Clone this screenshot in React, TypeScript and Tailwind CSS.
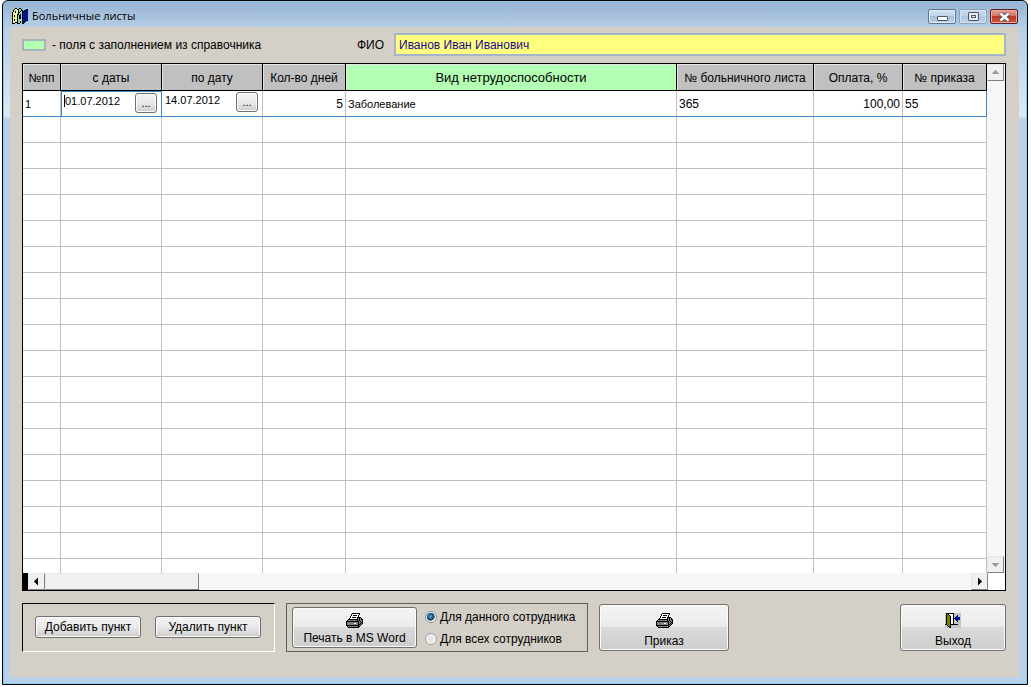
import { useState } from "react";
import type { ReactNode } from "react";

const palette: Record<string, string> = {
  k: "#000000",
  w: "#ffffff",
  g: "#808080",
  s: "#c6c6c6",
  o: "#808000",
  n: "#00148c",
  y: "#eef09a",
  t: "#8fd8d0",
};

const printerPixels = [
  "......kkkkkkkk...",
  ".....kwwwwwwwk...",
  ".....kwkkkkwk....",
  "....kwwwwwwwk....",
  "....kwkkkkwkkkk..",
  "...kwwwwwwwkgkgk.",
  "..kkkkkkkkkkgkgkk",
  ".kgggggggggkgkggk",
  "kkkkkkkkkkkkkgkgk",
  "kgggggggggggkggkk",
  "kgggggggwwggkgkgk",
  "kgggggggggggkkgk.",
  "kkkkkkkkkkkkkgk..",
  ".kggggggggggkk...",
  "..kkkkkkkkkkk....",
];

const exitPixels = [
  "skkkkkkkksssssss",
  "skokwwwwksssssss",
  "skookwwwksssnsss",
  "skoookwwkssnnsss",
  "skoookwwksnnnnns",
  "skoookwwknnnnnns",
  "skoookwwksnnnnns",
  "skoookwwkssnnsss",
  "skoookwwksssnsss",
  "skoookwwksssssss",
  "skoookwwksssssss",
  "kkoookkkkkkkksss",
  "sskookssssssssss",
  "ssskokssssssssss",
  "sssskkssssssssss",
];

const booksPixels = [
  "...kk..kk.......",
  "..kyykkttk....kk",
  ".kyyyykttkk.kknn",
  ".kykyyktktkknnnn",
  "kyykyykkttknnnnn",
  "kyyyyyktttknnnnn",
  "kyyyykktktknnnnn",
  "kykyyktkktknnnnn",
  "kykyyktkktknnnnn",
  "kyyyyktkktknnnnn",
  "kyyyyktkktknnnnn",
  "kykyyktttyknnnnn",
  "kykyyktttyknnnkk",
  "kyyyykttkyknnk..",
  "kyykkkttk.knk...",
  "kkk..kkk..kk....",
];

function PixelIcon({ pixels }: { pixels: string[] }) {
  const width = pixels[0].length;
  return (
    <svg
      width={width}
      height={pixels.length}
      viewBox={`0 0 ${width} ${pixels.length}`}
      shapeRendering="crispEdges"
      aria-hidden="true"
      className="shrink-0"
    >
      {pixels.flatMap((row, y) =>
        [...row].map((c, x) =>
          palette[c] ? <rect key={`${x}-${y}`} x={x} y={y} width={1} height={1} fill={palette[c]} /> : null,
        ),
      )}
    </svg>
  );
}

const buttonLook =
  "rounded-[3px] border border-[#707070] bg-[linear-gradient(#f3f3f3,#e9e9e9_50%,#cdcdcd)] shadow-[inset_0_0_0_1px_#fbfbfb]";

function SmallButton({ children }: { children: ReactNode }) {
  return (
    <button type="button" className={`h-[22px] w-[106px] whitespace-nowrap ${buttonLook}`}>
      {children}
    </button>
  );
}

function IconButton({ pixels, label, className }: { pixels: string[]; label: string; className: string }) {
  return (
    <button
      type="button"
      className={`flex flex-col items-center justify-end whitespace-nowrap rounded-[3px] border border-[#707070] bg-[linear-gradient(#f4f4f4,#ebebeb_48%,#dadada_50%,#cdcdcd)] pb-[1px] shadow-[inset_0_0_0_1px_#fbfbfb] ${className}`}
    >
      <PixelIcon pixels={pixels} />
      {label}
    </button>
  );
}

function TitleBar() {
  return (
    <header className="flex h-[26px] items-start justify-between pr-[1px] pl-[2px]">
      <div className="flex items-center gap-1 pt-[7px]">
        <PixelIcon pixels={booksPixels} />
        <h1 className="font-['Open_Sans','Noto_Sans',sans-serif] text-[11px] leading-4">Больничные листы</h1>
      </div>
      <div className="flex gap-[3px] pt-2">
        <button
          type="button"
          aria-label="Свернуть"
          className="flex h-[15px] w-7 items-end justify-center rounded-[2px] border border-[#5f7590] bg-[linear-gradient(#d3e2f3,#bfd3ea_48%,#a5bedb_50%,#b9d2ec)] pb-[2px] shadow-[inset_0_0_0_1px_#dfeaf6]"
        >
          <span className="h-[5px] w-[11px] rounded-[1px] border border-[#535666] bg-white" />
        </button>
        <button
          type="button"
          aria-label="Развернуть"
          className="flex h-[15px] w-7 items-center justify-center rounded-[2px] border border-[#8ba3bf] bg-[linear-gradient(#c8d9ed,#bcd1e9_48%,#afc7e2_50%,#bfd5ed)] shadow-[inset_0_0_0_1px_#d3e1f1]"
        >
          <span className="flex h-[9px] w-[11px] items-center justify-center rounded-[1px] border border-[#535666] bg-[#e4ecf5]">
            <span className="h-[3px] w-[5px] border border-[#535666]" />
          </span>
        </button>
        <button
          type="button"
          aria-label="Закрыть"
          className="flex h-[15px] w-7 items-center justify-center rounded-[2px] border border-[#5a1a20] bg-[linear-gradient(#e6a493,#d2705c_48%,#bb3a24_50%,#cf5a3c)] shadow-[inset_0_0_0_1px_#e8aba0]"
        >
          <svg width="13" height="10" viewBox="0 0 13 10" aria-hidden="true">
            <path d="M2.5 1.5 L10.5 8.5 M10.5 1.5 L2.5 8.5" stroke="#535666" strokeWidth="4.4" />
            <path d="M2.5 1.5 L10.5 8.5 M10.5 1.5 L2.5 8.5" stroke="#ffffff" strokeWidth="2.4" />
          </svg>
        </button>
      </div>
    </header>
  );
}

const columns = [
  { label: "№пп", width: "w-[38px]" },
  { label: "с даты", width: "w-[101px]" },
  { label: "по дату", width: "w-[101px]" },
  { label: "Кол-во дней", width: "w-[83px]" },
  { label: "Вид нетрудоспособности", width: "", lookup: true },
  { label: "№ больничного листа", width: "w-[137px]" },
  { label: "Оплата, %", width: "w-[89px]" },
  { label: "№ приказа", width: "w-[84px]" },
];

const emptyRows = Array.from({ length: 17 }, (_, i) => i);

function DateField({ label, initial, active }: { label: string; initial: string; active?: boolean }) {
  const [value, setValue] = useState(initial);
  return (
    <div className="flex h-[22px] items-start pr-1 pl-[2px]">
      <span className={`mt-[3px] h-3 w-px ${active ? "bg-black" : "bg-transparent"}`} />
      <input
        aria-label={label}
        value={value}
        onChange={(e) => setValue(e.target.value)}
        className="h-[18px] w-0 min-w-0 flex-1 bg-transparent text-[11px] outline-none"
      />
      <button
        type="button"
        aria-label={`Выбрать: ${label}`}
        className={`mt-[1px] flex h-5 w-[22px] items-end justify-center pb-[3px] text-[11px] leading-3 ${buttonLook}`}
      >
        ...
      </button>
    </div>
  );
}

function SickLeaveTable() {
  const cell = "h-[26px] border-r border-r-[#c0c0c0] border-b border-b-[#3e86c8]";
  return (
    <table className="w-full table-fixed border-separate border-spacing-0">
      <thead>
        <tr>
          {columns.map((c) => (
            <th
              key={c.label}
              scope="col"
              className={`h-[27px] border-r border-b border-black pt-[2px] font-normal whitespace-nowrap shadow-[inset_1px_1px_0_#e4e4e4] ${c.width} ${
                c.lookup ? "bg-[#b3ffb3] text-[13px]" : "bg-[#c0c0c0] text-[12px]"
              }`}
            >
              {c.label}
            </th>
          ))}
        </tr>
      </thead>
      <tbody>
        <tr>
          <td className={`${cell} pl-[2px] text-[11px]`}>1</td>
          <td className="h-[26px] border border-[#3e86c8] align-top">
            <DateField label="с даты" initial="01.07.2012" active />
          </td>
          <td className={`${cell} align-top`}>
            <DateField label="по дату" initial="14.07.2012" />
          </td>
          <td className={`${cell} pr-[2px] text-right`}>5</td>
          <td className={`${cell} pl-[2px] text-[11px]`}>Заболевание</td>
          <td className={`${cell} pl-[2px]`}>365</td>
          <td className={`${cell} pr-[2px] text-right`}>100,00</td>
          <td className="h-[26px] border-r border-b border-[#3e86c8] pl-[2px]">55</td>
        </tr>
        {emptyRows.map((row) => (
          <tr key={row}>
            {columns.map((c) => (
              <td key={c.label} className="h-[26px] border-r border-b border-[#c0c0c0]" />
            ))}
          </tr>
        ))}
        <tr>
          {columns.map((c) => (
            <td key={c.label} className="h-[14px] border-r border-[#c0c0c0]" />
          ))}
        </tr>
      </tbody>
    </table>
  );
}

function ScrollButton({ label, path, color }: { label: string; path: string; color: string }) {
  return (
    <button
      type="button"
      aria-label={label}
      className="flex h-[17px] w-[17px] shrink-0 items-center justify-center border border-t-[#e8e8e8] border-r-[#808080] border-b-[#808080] border-l-[#e8e8e8] bg-[#f0f0f0]"
    >
      <svg width="9" height="9" viewBox="0 0 9 9" aria-hidden="true">
        <path d={path} fill={color} />
      </svg>
    </button>
  );
}

function Grid() {
  return (
    <section className="border border-black bg-white">
      <div className="flex">
        <div className="min-w-0 flex-1">
          <SickLeaveTable />
        </div>
        <div className="flex w-[18px] flex-col items-start justify-between bg-[#f6f6f6]">
          <ScrollButton label="Вверх" path="M4.5 2 L8.5 6 H0.5 Z" color="#9a9a9a" />
          <ScrollButton label="Вниз" path="M0.5 3 H8.5 L4.5 7 Z" color="#9a9a9a" />
        </div>
      </div>
      <div className="flex h-[17px] bg-[#f6f6f6]">
        <div className="w-[5px] bg-black" />
        <ScrollButton label="Влево" path="M6 0.5 V8.5 L2 4.5 Z" color="#000000" />
        <div className="w-[154px] border border-t-[#e8e8e8] border-r-[#808080] border-b-[#808080] border-l-[#e8e8e8] bg-[#f0f0f0]" />
        <div className="flex-1" />
        <ScrollButton label="Вправо" path="M3 0.5 V8.5 L7 4.5 Z" color="#000000" />
        <div className="w-[17px] bg-white" />
      </div>
    </section>
  );
}

const scopes = [
  { id: "current", label: "Для данного сотрудника" },
  { id: "all", label: "Для всех сотрудников" },
];

function PrintScope() {
  const [scope, setScope] = useState("current");
  return (
    <div className="flex flex-col gap-1 pt-[1px]">
      {scopes.map((s) => (
        <label key={s.id} className="flex h-[18px] items-center gap-[3px] whitespace-nowrap">
          <input
            type="radio"
            name="scope"
            checked={scope === s.id}
            onChange={() => setScope(s.id)}
            className="h-3 w-3 appearance-none rounded-full border border-[#a0a0a0] bg-[radial-gradient(circle,#e0e0e0,#f8f8f8)] shadow-[inset_0_0_0_1px_#f4f4f4] checked:border-[#7f9aa8] checked:bg-[radial-gradient(circle_at_45%_45%,#59b6dc_0,#1c4f74_35%,#0e3450_50%,#eef4f7_56%)]"
          />
          {s.label}
        </label>
      ))}
    </div>
  );
}

function Footer() {
  return (
    <footer className="flex items-start pt-3">
      <div className="flex h-[49px] w-[253px] shrink-0 items-start gap-[14px] border border-t-black border-r-white border-b-white border-l-black pt-3 pl-3">
        <SmallButton>Добавить пункт</SmallButton>
        <SmallButton>Удалить пункт</SmallButton>
      </div>
      <div className="ml-[11px] flex h-[49px] w-[302px] shrink-0 items-start gap-2 border border-[#5f5f5f] pt-[3px] pl-[5px]">
        <IconButton pixels={printerPixels} label="Печать в MS Word" className="h-[41px] w-[125px] gap-[2px]" />
        <PrintScope />
      </div>
      <IconButton pixels={printerPixels} label="Приказ" className="mt-[1px] ml-[11px] h-[47px] w-[130px] gap-[5px]" />
      <IconButton pixels={exitPixels} label="Выход" className="mt-[1px] ml-auto h-[47px] w-[106px] gap-[5px]" />
    </footer>
  );
}

export default function App() {
  const [name, setName] = useState("Иванов Иван Иванович");
  return (
    <div className="flex min-h-screen flex-col bg-white pr-[3px] pb-[2px] pl-[2px] font-['Liberation_Sans',Arial,sans-serif] text-[12px] leading-4 text-black">
      <div className="flex flex-1 flex-col rounded-t-[6px] border border-black bg-[linear-gradient(#96b2d0,#b7cfe8_27px,#dce9f6_115px,#b9d1ea_118px)] pr-2 pb-[7px] pl-[7px] shadow-[inset_0_0_0_1px_#7fd0ee]">
        <TitleBar />
        <main className="flex-1 bg-[#d4d0c8] pt-[6px] pr-[13px] pb-5 pl-3">
          <div className="flex items-center pb-[7px]">
            <span className="h-3 w-6 border-2 border-[#a8b4bc] bg-[#b3ffb3]" />
            <p className="w-[226px] pl-[6px] whitespace-nowrap">- поля с заполнением из справочника</p>
            <label htmlFor="fio" className="w-[122px] pr-[10px] text-right">
              ФИО
            </label>
            <input
              id="fio"
              value={name}
              onChange={(e) => setName(e.target.value)}
              className="h-[23px] min-w-0 flex-1 border-2 border-[#a3b5c8] bg-[#ffff80] pl-[3px] text-[#1a0a8c] outline-none"
            />
          </div>
          <Grid />
          <Footer />
        </main>
      </div>
    </div>
  );
}
